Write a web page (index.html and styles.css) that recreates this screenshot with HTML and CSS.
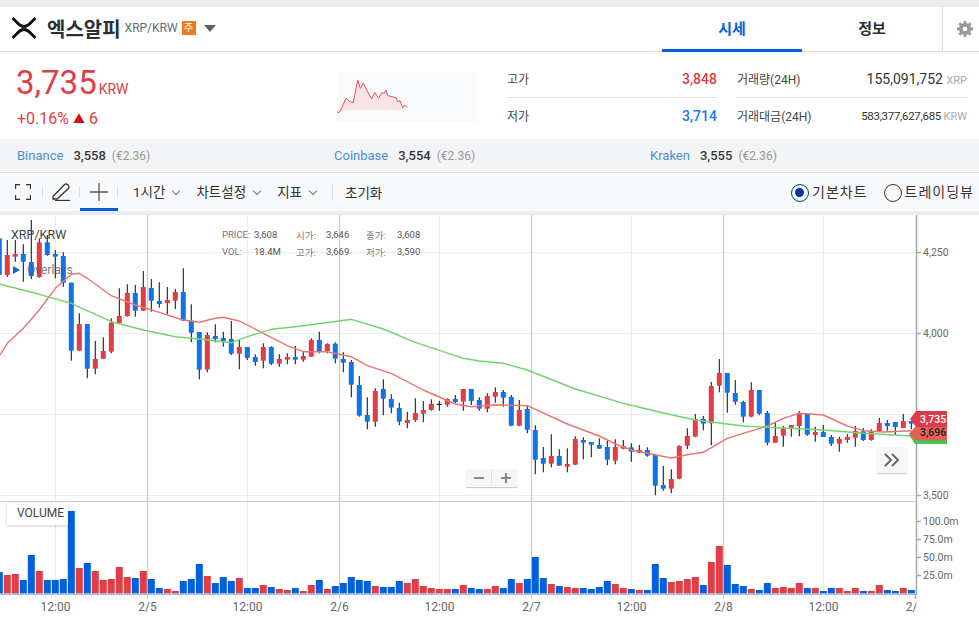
FILE: index.html
```html
<!DOCTYPE html>
<html lang="ko">

<head>
    <meta charset="UTF-8">
    <meta name="viewport" content="width=device-width, initial-scale=1.0">
    <title>엑스알피 XRP/KRW</title>
    <link rel="stylesheet" href="styles.css">
</head>

<body>
    <header class="top-bar">
        <div class="brand">
            <svg class="coin-logo" viewBox="0 0 26 22" aria-hidden="true">
                <path d="M1.5 1 L6 5.5 Q13 13.500 20 5.5 L24.500 1" />
                <path d="M1.5 21 L6 16.500 Q13 8.500 20 16.500 L24.500 21" />
            </svg>
            <span class="coin-name">엑스알피</span>
            <span class="coin-pair">XRP/KRW</span>
            <span class="coin-badge">주</span>
            <span class="coin-caret"></span>
        </div>
        <nav class="tabs">
            <a class="tab active">시세</a>
            <a class="tab">정보</a>
        </nav>
        <div class="settings">
            <svg viewBox="0 0 16 16" width="16" height="16" aria-hidden="true">
                <circle class="gear-ring" cx="8" cy="8" r="4.200" />
                <path class="gear-teeth" d="M8 0V3M8 13V16M0 8H3M13 8H16M2.300 2.300L4.500 4.500M11.500 11.500L13.700 13.700M13.700 2.300L11.500 4.500M4.500 11.500L2.300 13.700" />
            </svg>
        </div>
    </header>

    <section class="summary">
        <div class="quote">
            <div class="price">3,735<span class="price-unit">KRW</span></div>
            <div class="change">+0.16% <span class="up-arrow">▲</span> 6</div>
        </div>
        <svg class="spark" viewBox="337 72 140 50" aria-hidden="true">
            <polygon class="spark-area" points="340,110 340,111.700 346,98.300 350,101.700 353.300,102.700 357.700,80 360.300,88.300 363.300,83.300 366.700,90 371.700,99 374.700,92.300 378.700,98.300 381.700,92.700 384.300,93.300 386,90 387.700,95.700 396,97.700 397.700,101.700 400,100.700 402.700,107.700 404.700,105 405,110" />
            <polyline class="spark-line" points="340,111.700 346,98.300 350,101.700 353.300,102.700 357.700,80 360.300,88.300 363.300,83.300 366.700,90 371.700,99 374.700,92.300 378.700,98.300 381.700,92.700 384.300,93.300 386,90 387.700,95.700 396,97.700 397.700,101.700 400,100.700 402.700,107.700 404.700,105 407.300,107.700" />
            <polyline class="spark-start" points="337,112 338.500,112.500 340,111.700" />
        </svg>
        <div class="stats">
            <div class="stat stat-first"><span>고가</span><b class="high">3,848</b></div>
            <div class="stat stat-first"><span>거래량(24H)</span><em class="big">155,091,752 <small>XRP</small></em></div>
            <div class="stat"><span>저가</span><b class="low">3,714</b></div>
            <div class="stat"><span>거래대금(24H)</span><em>583,377,627,685 <small>KRW</small></em></div>
        </div>
    </section>

    <section class="exchanges">
        <div class="exchange"><span class="ex-name">Binance</span><b>3,558</b><span class="ex-fiat">(€2.36)</span></div>
        <div class="exchange"><span class="ex-name">Coinbase</span><b>3,554</b><span class="ex-fiat">(€2.36)</span></div>
        <div class="exchange"><span class="ex-name">Kraken</span><b>3,555</b><span class="ex-fiat">(€2.36)</span></div>
    </section>

    <section class="toolbar">
        <div class="tool tool-first">
            <svg viewBox="0 0 16 16" width="16" height="16" aria-hidden="true">
                <path d="M0.500 5V0.500H5M11 0.500H15.500V5M15.500 11V15.500H11M5 15.500H0.500V11" />
            </svg>
        </div>
        <div class="tool">
            <svg viewBox="0 0 19 18" width="19" height="18" aria-hidden="true">
                <path d="M1 13.500L12.500 1.500Q14 0.500 15.500 1.500L16.500 2.500Q17.500 4 16.500 5.500L5 16H1Z" />
                <path d="M3 17.500H18" />
            </svg>
        </div>
        <div class="tool tool-active">
            <svg viewBox="0 0 18 18" width="18" height="18" aria-hidden="true">
                <path d="M9 0V18M0 9H18" />
            </svg>
        </div>
        <div class="menus">
            <a class="menu">1시간<i class="chev"></i></a>
            <a class="menu">차트설정<i class="chev"></i></a>
            <a class="menu">지표<i class="chev"></i></a>
        </div>
        <a class="reset">초기화</a>
        <div class="view-switch">
            <label class="radio checked">기본차트</label>
            <label class="radio">트레이딩뷰</label>
        </div>
    </section>

    <section class="chart">
        <svg id="chart-svg" viewBox="0 215 979 407" aria-hidden="true"></svg>

        <div class="volume-box">VOLUME</div>
        <div class="legend-pair">XRP/KRW</div>
        <div class="legend-ohlc">
            <span>PRICE:</span><b>3,608</b><span>시가:</span><b>3,646</b><span>종가:</span><b>3,608</b>
            <span>VOL:</span><b>18.4M</b><span>고가:</span><b>3,669</b><span>저가:</span><b>3,590</b>
        </div>
        <div class="legend-overlays"><i></i>Overlays</div>

        <div class="zoom-box">
            <svg viewBox="0 0 51 18" width="51" height="18" aria-hidden="true">
                <path class="zoom-line" d="M8 9H18M35 9H45M40 4V14" />
                <path class="zoom-div" d="M25.500 1V17" />
            </svg>
        </div>
        <div class="jump-box">
            <svg viewBox="0 0 16 14" width="16" height="14" aria-hidden="true">
                <path d="M1 1L7 7L1 13M8 1L14 7L8 13" />
            </svg>
        </div>
    </section>

    <script src="chart.js"></script>
</body>

</html>
```

FILE: styles.css
```css
* {
    box-sizing: border-box;
}

html,
body {
    margin: 0;
    height: 622px;
    overflow: hidden;
}

body {
    padding-top: 7px;
    background-color: #e9ecf1;
    color: #333;
    font-family: Roboto, "Noto Sans CJK KR", sans-serif;
}

/* Top bar */
.top-bar {
    display: flex;
    height: 45px;
    background-color: #fff;
    border-bottom: 1px solid #dcdcdc;
}

.brand {
    display: flex;
    align-items: center;
    padding-left: 11px;
    padding-bottom: 2px;
}

.coin-logo {
    width: 26px;
    height: 22px;
    fill: none;
    stroke: #111;
    stroke-width: 2.800;
    margin-right: 10px;
}

.coin-name {
    font-size: 20px;
    font-weight: 700;
    color: #2b2f38;
    margin-right: 4px;
}

.coin-pair {
    font-size: 12px;
    color: #666b78;
    margin-right: 4px;
}

.coin-badge {
    width: 14px;
    height: 14px;
    background-color: #f07a1c;
    color: #fff;
    font-size: 10px;
    line-height: 14px;
    text-align: center;
}

.coin-caret {
    width: 0;
    height: 0;
    margin-left: 8px;
    border-left: 6.500px solid transparent;
    border-right: 6.500px solid transparent;
    border-top: 7px solid #5a6072;
}

.tabs {
    display: flex;
    margin-left: auto;
}

.tab {
    width: 140px;
    margin-bottom: -1px;
    font-size: 15px;
    font-weight: 700;
    line-height: 44px;
    text-align: center;
    color: #2b2f38;
}

.tab.active {
    color: #0060df;
    border-bottom: 3px solid #0060df;
}

.settings {
    display: flex;
    align-items: center;
    width: 37px;
    padding-left: 14px;
    border-left: 1px solid #dcdcdc;
}

.gear-ring {
    fill: none;
    stroke: #999;
    stroke-width: 3.800;
}

.gear-teeth {
    fill: none;
    stroke: #999;
    stroke-width: 2.800;
}

/* Price summary */
.summary {
    display: flex;
    height: 87px;
    background-color: #fff;
}

.quote {
    width: 337px;
    padding: 12px 0 0 16px;
    color: #e03d47;
}

.price {
    font-size: 33px;
    line-height: 38px;
}

.price-unit {
    margin-left: 2px;
    font-size: 14px;
}

.change {
    padding-left: 1px;
    font-size: 16px;
    line-height: 22px;
}

.up-arrow {
    color: #d40f1b;
    font-size: 12px;
}

.spark {
    width: 140px;
    height: 50px;
    margin-top: 20px;
    background-color: #f9fafc;
}

.spark-area {
    fill: #f8e4e6;
}

.spark-line {
    fill: none;
    stroke: #e2525c;
    stroke-width: 1;
}

.spark-start {
    fill: none;
    stroke: #2a7de1;
    stroke-width: 1;
}

.stats {
    display: grid;
    grid-template-columns: 210px 230px;
    grid-auto-rows: 37px;
    column-gap: 20px;
    margin: 8px 0 0 30px;
    font-size: 12px;
    color: #444;
}

.stat {
    display: flex;
    align-items: center;
    justify-content: space-between;
}

.stat-first {
    height: 38px;
    border-bottom: 1px solid #e2e2e2;
}

.stat b {
    font-size: 14px;
    font-weight: 500;
}

.stat em {
    font-style: normal;
    font-size: 11.500px;
    color: #333;
    letter-spacing: -0.3px;
}

.stat em.big {
    font-size: 14px;
    letter-spacing: 0;
}

.stat small {
    font-size: 11px;
    color: #aaa;
    letter-spacing: 0;
}

.high {
    color: #e03d47;
}

.low {
    color: #2079e8;
}

/* Other exchanges */
.exchanges {
    display: grid;
    grid-template-columns: 317px 316px 1fr;
    align-items: center;
    height: 34px;
    padding: 0 0 1px 17px;
    background-color: #f3f4f6;
    border-bottom: 1px solid #dedede;
    font-size: 13px;
}

.exchange b {
    margin: 0 6px 0 10px;
    font-weight: 500;
    color: #3a3a3a;
}

.ex-name {
    color: #4a8fd0;
}

.ex-fiat {
    font-size: 12px;
    color: #999;
}

/* Chart toolbar */
.toolbar {
    display: flex;
    align-items: center;
    height: 38px;
    background-color: #f8f9fb;
    font-size: 13.500px;
    color: #333;
}

.tool {
    position: relative;
    display: flex;
    align-items: center;
    justify-content: center;
    width: 37px;
    height: 38px;
}

.tool::after {
    content: "";
    position: absolute;
    top: 13px;
    right: 0;
    width: 1px;
    height: 12px;
    background-color: #dcdee3;
}

.tool-first {
    width: 43px;
    padding-left: 3px;
}

.tool-active {
    width: 38px;
    border-bottom: 3px solid #0060df;
    padding-top: 2px;
}

.tool svg {
    fill: none;
    stroke: #333;
    stroke-width: 1.300;
}

.tool-active svg {
    stroke: #555;
}

.menus {
    display: flex;
    gap: 16px;
    width: 215px;
    padding-left: 15px;
    border-right: 1px solid #dcdee3;
    line-height: 14px;
}

.menu {
    display: flex;
    align-items: center;
    white-space: nowrap;
}

.chev {
    width: 6px;
    height: 6px;
    margin: -3px 1px 0 8px;
    border-right: 1px solid #777;
    border-bottom: 1px solid #777;
    transform: rotate(45deg);
}

.reset {
    margin-left: 12px;
}

.view-switch {
    display: flex;
    gap: 16px;
    margin-left: auto;
    padding-right: 5px;
}

.radio {
    position: relative;
    padding-left: 21px;
    font-size: 14px;
    letter-spacing: 1px;
    line-height: 16px;
}

.radio::before {
    content: "";
    position: absolute;
    left: 0;
    top: 0;
    width: 16px;
    height: 16px;
    border: 1.500px solid #333;
    border-radius: 50%;
}

.radio.checked::before {
    border-color: #003a9a;
}

.radio.checked::after {
    content: "";
    position: absolute;
    left: 3.500px;
    top: 3.500px;
    width: 9px;
    height: 9px;
    background-color: #003a9a;
    border-radius: 50%;
}

/* Chart */
.chart {
    position: relative;
    height: 407px;
    margin-top: 4px;
    background-color: #fff;
}

#chart-svg {
    display: block;
    width: 979px;
    height: 407px;
}

.grid-light {
    stroke: #ececec;
    stroke-width: 1.200;
}

.grid-dark {
    stroke: #cbcbcb;
    stroke-width: 1.200;
}

.axis-line {
    stroke: #a8a8a8;
    stroke-width: 1.500;
}

.axis-text {
    font-family: Roboto, sans-serif;
    font-size: 10.500px;
    fill: #666;
}

.time-text {
    font-family: Roboto, sans-serif;
    font-size: 12px;
    fill: #666;
    text-anchor: middle;
}

.wick {
    stroke: #1a1d28;
    stroke-width: 1.100;
}

.body-r,
.bar-r {
    fill: #e03d47;
}

.body-b {
    fill: #1273e6;
}

.bar-b {
    fill: #0060df;
}

.ma-red {
    fill: none;
    stroke: #e9756f;
    stroke-width: 1.400;
    stroke-linejoin: round;
}

.ma-green {
    fill: none;
    stroke: #6fd56a;
    stroke-width: 1.400;
    stroke-linejoin: round;
}

.tag-text {
    font-family: Roboto, sans-serif;
    font-size: 10.500px;
    font-weight: 500;
}

.tag-main {
    fill: #fff;
}

.tag-avg {
    fill: #222;
}

.volume-box {
    position: absolute;
    left: 7px;
    top: 288px;
    width: 61px;
    height: 22px;
    padding-left: 10px;
    background-color: #fff;
    box-shadow: 0 1px 3px rgba(0, 0, 0, 0.2);
    color: #444;
    font-size: 12px;
    line-height: 20px;
}

.legend-pair {
    position: absolute;
    left: 11px;
    top: 12px;
    font-size: 12.500px;
    color: #444;
}

.legend-ohlc {
    position: absolute;
    left: 222px;
    top: 11px;
    display: grid;
    grid-template-columns: 32px 42px 30px 40px 31px auto;
    grid-auto-rows: 17px;
    align-items: center;
    font-size: 9.500px;
    color: #777;
}

.legend-ohlc b {
    font-weight: 400;
    color: #555;
}

.legend-overlays {
    position: absolute;
    left: 13px;
    top: 48px;
    display: flex;
    align-items: center;
    font-size: 12px;
    color: rgba(90, 90, 90, 0.8);
}

.legend-overlays i {
    width: 0;
    height: 0;
    margin-right: 7px;
    border-left: 7px solid #1e62c8;
    border-top: 4px solid transparent;
    border-bottom: 4px solid transparent;
}

.zoom-box {
    position: absolute;
    left: 466px;
    top: 254px;
    display: flex;
    width: 51px;
    height: 18px;
    background-color: #f6f6f6;
    box-shadow: 0 1px 1px rgba(0, 0, 0, 0.2);
}

.zoom-line {
    fill: none;
    stroke: #8a8a8a;
    stroke-width: 2.200;
}

.zoom-div {
    fill: none;
    stroke: #e2e2e2;
    stroke-width: 1;
}

.jump-box {
    position: absolute;
    left: 877px;
    top: 232px;
    display: flex;
    align-items: center;
    justify-content: center;
    width: 30px;
    height: 26px;
    background-color: #f6f6f6;
    box-shadow: 0 1px 1px rgba(0, 0, 0, 0.2);
}

.jump-box svg {
    fill: none;
    stroke: #666;
    stroke-width: 2;
}
```

FILE: chart.js
```js
// [wick top, wick bottom, body top, body bottom, colour], read per 3x segment of the chart
const candleSegments = [
    { top: 215, rows: [
        [70, 180, 70, 180, "b"], [75, 185, 120, 180, "r"], [75, 140, 117, 125, "r"], [88, 200, 117, 140, "b"],
        [15, 192, 141, 183, "b"], [70, 188, 82, 186, "r"], [60, 122, 82, 120, "b"], [105, 190, 117, 125, "b"],
        [112, 215, 123, 203, "b"], [203, 437, 203, 407, "b"], [295, 407, 327, 407, "r"], [327, 490, 327, 461, "b"],
        [378, 478, 432, 461, "r"], [367, 431, 408, 431, "r"], [310, 415, 323, 410, "r"], [220, 327, 303, 324, "r"],
        [208, 305, 234, 303, "r"], [210, 305, 234, 287, "b"], [168, 287, 216, 287, "r"], [192, 290, 219, 257, "b"],
        [202, 278, 258, 267, "b"], [216, 298, 255, 264, "r"], [222, 282, 231, 257, "r"], [160, 318, 231, 317, "b"],
        [268, 382, 317, 353, "b"], [351, 493, 351, 464, "b"], [352, 472, 360, 464, "r"], [328, 382, 363, 372, "b"],
        [350, 395, 369, 378, "b"], [318, 420, 372, 416, "b"], [375, 463, 396, 416, "r"], [396, 435, 396, 429, "b"],
        [418, 452, 426, 441, "b"], [385, 460, 396, 437, "r"], [394, 450, 396, 446, "b"], [418, 455, 432, 446, "r"],
        [415, 448, 426, 434, "r"], [393, 448, 426, 434, "b"], [408, 440, 423, 434, "r"], [370, 425, 375, 425, "r"],
        [350, 415, 375, 408, "b"], [385, 415, 387, 408, "r"]
    ] },
    { top: 310, rows: [
        [97, 160, 101, 146, "b"], [127, 187, 147, 158, "b"], [150, 262, 156, 224, "b"], [198, 320, 225, 317, "b"],
        [262, 358, 315, 335, "b"], [235, 350, 243, 335, "r"], [208, 316, 237, 266, "b"], [253, 310, 267, 293, "b"],
        [278, 346, 294, 335, "b"], [305, 355, 330, 339, "r"], [265, 335, 309, 330, "r"], [273, 337, 300, 311, "r"],
        [268, 302, 282, 300, "r"], [272, 302, 283, 285, "k"], [265, 290, 267, 284, "r"], [255, 280, 267, 276, "b"],
        [237, 302, 237, 275, "r"], [237, 285, 237, 273, "b"], [262, 302, 270, 296, "b"], [250, 307, 258, 296, "r"],
        [232, 278, 246, 260, "r"], [240, 290, 246, 263, "b"], [255, 349, 261, 347, "b"], [270, 349, 300, 347, "r"],
        [288, 370, 297, 359, "b"], [346, 493, 360, 449, "b"], [411, 487, 444, 461, "b"], [373, 472, 438, 461, "r"],
        [418, 467, 438, 467, "b"], [415, 487, 462, 470, "r"], [379, 465, 387, 464, "r"], [382, 448, 390, 398, "b"],
        [396, 442, 396, 404, "b"], [385, 416, 405, 416, "b"], [393, 466, 411, 449, "b"], [388, 463, 411, 452, "r"],
        [390, 418, 408, 416, "r"], [400, 455, 412, 425, "b"], [405, 430, 420, 428, "r"], [412, 440, 420, 437, "b"]
    ] },
    { top: 340, rows: [
        [345, 466, 345, 437, "b"], [378, 452, 435, 446, "b"], [388, 460, 417, 446, "r"], [316, 418, 318, 416, "r"],
        [265, 328, 288, 317, "r"], [222, 292, 237, 290, "r"], [228, 271, 237, 251, "b"], [126, 316, 138, 250, "r"],
        [57, 157, 99, 137, "r"], [99, 218, 99, 158, "b"], [120, 194, 159, 185, "b"], [182, 247, 186, 230, "b"],
        [127, 232, 150, 230, "r"], [150, 226, 150, 221, "b"], [213, 316, 219, 308, "b"], [248, 308, 288, 308, "r"],
        [258, 320, 265, 287, "r"], [255, 290, 255, 263, "r"], [213, 289, 220, 258, "r"], [220, 287, 220, 284, "b"],
        [260, 305, 276, 285, "r"], [255, 291, 276, 291, "b"], [285, 318, 291, 311, "b"], [290, 335, 297, 311, "r"],
        [282, 308, 291, 300, "r"], [258, 320, 273, 293, "r"], [264, 303, 274, 300, "b"], [268, 302, 273, 300, "r"],
        [234, 275, 249, 273, "r"], [240, 272, 249, 258, "b"], [246, 285, 246, 261, "b"], [222, 264, 243, 264, "r"],
        [243, 268, 243, 251, "b"]
    ] }
];

// bar tops per 3x crop, same candle index order; the crops start at y = 495
const volumeTops = [
    231, 240, 237, 255, 180, 228, 255, 255, 252, 48, 219, 204, 228, 255, 252, 216, 246, 249, 228, 252, 279,
    282, 288, 258, 252, 207, 243, 264, 246, 258, 249, 279, 279, 270, 276, 282, 285, 279, 288, 270, 255, 282,
    273, 264, 246, 255, 258, 273, 276, 276, 258, 264, 252, 273, 279, 282, 282, 282, 270, 279, 282, 282, 273,
    279, 252, 264, 252, 186, 249, 267, 273, 276, 279, 279, 282, 276, 258, 267, 279, 282, 285, 285, 207, 249,
    261, 258, 252, 246, 270, 201, 153, 210, 267, 273, 282, 285, 264, 279, 276, 279, 264, 279, 279, 288, 279,
    279, 288, 279, 288, 288, 270, 285, 288, 279, 285, 282
];
const volumeColors = "brrbbrbbbbrbrrrrrbrbbrrbbbrbbbrbbrbrrbrrbr" +
    "bbbbbrbbbrrrrrrbrbbrrbbrbbbrbrrbbbbrrbrbb" +
    "brrrrbrrbbbrbbrrrrbrbbrrrbrrbbrbb";

const redLine = [
    [215, [[0, 420], [22, 385], [70, 340], [118, 285], [166, 220], [214, 178], [238, 175], [262, 190], [334, 242], [406, 270], [478, 292], [550, 315], [598, 322], [646, 310], [670, 307], [718, 318], [790, 355], [862, 392], [910, 410], [982, 410]], 0],
    [310, [[64, 140], [112, 167], [184, 190], [280, 240], [376, 282], [424, 290], [496, 284], [592, 287], [712, 342], [808, 378], [856, 402], [904, 420], [990, 437]], 330],
    [340, [[64, 354], [112, 344], [160, 337], [232, 295], [280, 280], [352, 258], [400, 235], [448, 220], [520, 225], [592, 258], [640, 272], [700, 276], [785, 272]], 650]
];
const greenLine = [
    [215, [[0, 208], [118, 238], [214, 265], [334, 320], [430, 345], [526, 365], [598, 372], [694, 383], [742, 365], [814, 343], [886, 335], [990, 322]], 0],
    [310, [[64, 28], [160, 57], [256, 97], [400, 145], [448, 153], [520, 160], [592, 180], [736, 237], [880, 280], [990, 307]], 330],
    [340, [[136, 240], [280, 258], [352, 262], [520, 270], [640, 280], [785, 288]], 650]
];

const candleX = i => -0.7 + 8 * i;
const out = [];

function line(x1, y1, x2, y2, cls) {
    out.push(`<line x1="${x1}" y1="${y1}" x2="${x2}" y2="${y2}" class="${cls}"/>`);
}

function label(x, y, text, cls) {
    out.push(`<text x="${x}" y="${y}" class="${cls}">${text}</text>`);
}

function maPath(segments, cls) {
    const pts = [];
    segments.forEach(([top, points, left]) => {
        points.forEach(([x, y]) => pts.push(`${(left + x / 3).toFixed(1)},${(top + y / 3).toFixed(1)}`));
    });
    out.push(`<polyline points="${pts.join(" ")}" class="${cls}"/>`);
}

// grid
[252.5, 333.5, 414.5, 495.5].forEach(y => line(0, y, 917, y, "grid-light"));
[55.5, 247.5, 439.5, 631.5, 823.5].forEach(x => line(x, 215, x, 594, "grid-light"));
[147.5, 339.5, 531.5, 723.5].forEach(x => line(x, 215, x, 594, "grid-dark"));
line(0, 501.5, 917, 501.5, "grid-dark");

// candles
let index = 0;
candleSegments.forEach(seg => {
    seg.rows.forEach(([wt, wb, bt, bb, color]) => {
        const x = candleX(index);
        line(x, seg.top + wt / 3, x, seg.top + wb / 3, "wick");
        if (color === "k") {
            line(x - 2.5, seg.top + bt / 3, x + 2.5, seg.top + bt / 3, "wick");
        } else {
            out.push(`<rect x="${x - 2.5}" y="${seg.top + bt / 3}" width="5" height="${(bb - bt) / 3}" class="body-${color}"/>`);
        }
        index++;
    });
});

maPath(redLine, "ma-red");
maPath(greenLine, "ma-green");

// volume bars
volumeTops.forEach((top, i) => {
    const x = candleX(i);
    const y = 495 + top / 3;
    out.push(`<rect x="${x - 3.5}" y="${y}" width="7" height="${593.5 - y}" class="bar-${volumeColors[i] || "b"}"/>`);
});
out.push('<rect x="0" y="593.500" width="917" height="1.500" fill="#a3bbe0"/>');

// right axis
out.push('<rect x="917" y="215" width="62" height="407" fill="#fff"/>');
line(916.5, 215, 916.5, 595, "axis-line");
[[252.5, "4,250"], [333.5, "4,000"], [414.5, ""], [495.5, "3,500"], [521.5, "100.0m"], [539.5, "75.0m"], [557.5, "50.0m"], [575.5, "25.0m"]].forEach(([y, text]) => {
    line(917, y, 921, y, "axis-line");
    if (text) label(923, y + 3.5, text, "axis-text");
});

// time axis
[[55.5, "12:00"], [147.5, "2/5"], [247.5, "12:00"], [339.5, "2/6"], [439.5, "12:00"], [531.5, "2/7"], [631.5, "12:00"], [723.5, "2/8"], [823.5, "12:00"]].forEach(([x, text]) => {
    line(x, 594, x, 599, text.includes("/") ? "grid-dark" : "grid-light");
    label(x, 611, text, "time-text");
});
out.push('<svg x="900" y="595" width="16.500" height="24" viewBox="900 595 16.500 24"><text x="915" y="611" class="time-text">2/9</text></svg>');
line(915.5, 594, 915.5, 599, "axis-line");

// last price tags
out.push('<polygon points="909,435 915,428 947,428 947,444 915,444" fill="#43c84f"/>');
out.push('<polygon points="909,434 915,427 947,427 947,440.500 915,440.500" fill="#e0605a"/>');
out.push('<polygon points="910,419 916,411 947,411 947,427 916,427" fill="#dc3c46"/>');
label(920, 423, "3,735", "tag-text tag-main");
label(920, 435.5, "3,696", "tag-text tag-avg");

document.getElementById("chart-svg").innerHTML = out.join("");
```
